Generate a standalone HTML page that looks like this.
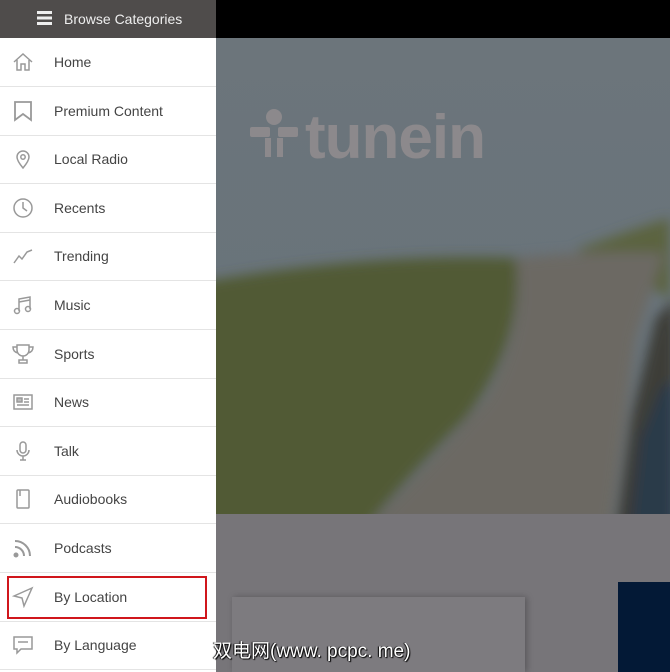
<!DOCTYPE html>
<html><head><meta charset="utf-8"><style>
body{margin:0;width:670px;height:672px;overflow:hidden;background:#777579;font-family:"Liberation Sans",Arial,sans-serif;position:relative}
#top{position:absolute;left:0;top:0;width:670px;height:38px;background:#000}
#hdr{position:absolute;left:0;top:0;width:216px;height:38px;background:#4f4c4b;color:#eee;font-size:14px}
#hdr .t{position:absolute;left:64px;top:11px}
#bg{position:absolute;left:216px;top:38px}
#card{position:absolute;left:232px;top:597px;width:293px;height:75px;background:#7d7b7f;box-shadow:2px 0 6px rgba(0,0,0,.25)}
#navy{position:absolute;left:618px;top:582px;width:52px;height:90px;background:#031936}
#menu{position:absolute;left:0;top:38px;width:216px;height:634px;background:#fff}
.row{position:absolute;left:0;width:216px;height:48px;border-bottom:1px solid #e4e4e4}
.row span{position:absolute;left:54px;top:16px;font-size:14px;color:#444}
.row svg{position:absolute;left:12px;top:13px}
#hl{position:absolute;left:7px;top:576px;width:196px;height:39px;border:2px solid #d0161c}
#wm{position:absolute;left:213px;top:636px;font-size:19px;color:#fff;font-family:"Liberation Sans","Noto Sans CJK SC",sans-serif;text-shadow:1px 1px 1px #000,-1px 0 1px #000}
</style></head><body>
<div id="top"></div>
<div id="hdr"><svg style="position:absolute;left:37px;top:11px" width="15" height="14"><rect y="0" width="15" height="3" fill="#eee"/><rect y="5.5" width="15" height="3" fill="#eee"/><rect y="11" width="15" height="3" fill="#eee"/></svg><span class="t">Browse Categories</span></div>
<svg id="bg" width="454" height="476" viewBox="0 0 454 476">
<defs><linearGradient id="sky" x1="0" y1="0" x2="0" y2="1"><stop offset="0" stop-color="#6c757b"/><stop offset="1" stop-color="#66727a"/></linearGradient>
<filter id="bl" x="-10%" y="-10%" width="120%" height="120%"><feGaussianBlur stdDeviation="6"/></filter></defs>
<rect width="454" height="476" fill="url(#sky)"/>
<g filter="url(#bl)">
<path d="M360 212 Q420 190 454 180 L454 260 L400 230 Z" fill="#5c6440"/>
<path d="M-20 245 Q150 215 300 220 Q310 300 250 380 Q190 440 150 490 L-20 490 Z" fill="#515a35"/>
<path d="M300 220 Q380 212 448 215 L420 300 L395 490 L150 490 Q220 420 270 360 Q310 290 300 220 Z" fill="#6c6963"/>
<path d="M440 280 L460 260 L460 490 L400 490 L415 380 Z" fill="#3c3c38"/>
<path d="M425 400 L445 350 L460 340 L460 490 L415 490 Z" fill="#2c3a48"/>
</g>
<g fill="#8c898c"><circle cx="58" cy="79" r="8"/><rect x="34" y="89" width="20" height="10" rx="2"/><rect x="62" y="89" width="20" height="10" rx="2"/><rect x="49" y="100" width="6" height="19"/><rect x="61" y="100" width="6" height="19"/>
<text x="89" y="120" font-size="62" font-weight="bold" font-family="Liberation Sans,sans-serif" letter-spacing="-1">tunein</text></g>
</svg>
<div id="card"></div><div id="navy"></div>
<div id="menu">
<div class="row" style="top:0"><svg width="22" height="22" fill="none" stroke="#999" stroke-width="1.5"><path d="M2 11 L11 3 L20 11 M5 9 V19 H9 V13 H13 V19 H17 V9"/></svg><span>Home</span></div>
<div class="row" style="top:48.6px"><svg width="22" height="22" fill="none" stroke="#999" stroke-width="1.8"><path d="M3 2 H19 V20 L11 14 L3 20 Z"/></svg><span>Premium Content</span></div>
<div class="row" style="top:97.2px"><svg width="22" height="22" fill="none" stroke="#999" stroke-width="1.5"><path d="M11 20 C6 14 5 11 5 9 A6 6 0 0 1 17 9 C17 11 16 14 11 20 Z"/><circle cx="11" cy="9" r="2.2"/></svg><span>Local Radio</span></div>
<div class="row" style="top:145.8px"><svg width="22" height="22" fill="none" stroke="#999" stroke-width="1.5"><circle cx="11" cy="11" r="9"/><path d="M11 5 V11 L15 14"/></svg><span>Recents</span></div>
<div class="row" style="top:194.4px"><svg width="22" height="22" fill="none" stroke="#999" stroke-width="1.5"><path d="M2 18 L7 11 L10 14 L15 7 L20 5"/></svg><span>Trending</span></div>
<div class="row" style="top:243px"><svg width="22" height="22" fill="none" stroke="#999" stroke-width="1.5"><path d="M7 17 V5 L18 3 V15"/><circle cx="5" cy="17" r="2.5"/><circle cx="16" cy="15" r="2.5"/><path d="M7 8 L18 6"/></svg><span>Music</span></div>
<div class="row" style="top:291.6px"><svg width="22" height="22" fill="none" stroke="#999" stroke-width="1.5"><path d="M5 2 H17 V7 A6 6 0 0 1 5 7 Z M5 4 H1 Q1 9 6 10 M17 4 H21 Q21 9 16 10 M11 13 V17 M7 20 H15 V17 H7 Z"/></svg><span>Sports</span></div>
<div class="row" style="top:340.2px"><svg width="22" height="22" fill="none" stroke="#999" stroke-width="1.5"><rect x="2" y="4" width="18" height="14"/><rect x="5" y="7" width="5" height="4" fill="#bbb"/><path d="M12 8 H17 M12 11 H17 M5 14 H17"/></svg><span>News</span></div>
<div class="row" style="top:388.8px"><svg width="22" height="22" fill="none" stroke="#999" stroke-width="1.5"><rect x="8" y="2" width="6" height="11" rx="3"/><path d="M5 10 A6 6 0 0 0 17 10 M11 16 V20 M8 20 H14"/></svg><span>Talk</span></div>
<div class="row" style="top:437.4px"><svg width="22" height="22" fill="none" stroke="#999" stroke-width="1.5"><rect x="5" y="2" width="12" height="18" rx="1"/><path d="M8 2 V8"/></svg><span>Audiobooks</span></div>
<div class="row" style="top:486px"><svg width="22" height="22" fill="none" stroke="#999" stroke-width="2"><path d="M3 10 A9 9 0 0 1 12 19 M3 4 A15 15 0 0 1 18 19"/><circle cx="4" cy="18" r="1.5" fill="#999"/></svg><span>Podcasts</span></div>
<div class="row" style="top:534.6px"><svg width="22" height="22" fill="none" stroke="#999" stroke-width="1.5"><path d="M20 2 L2 10 L10 12 L12 20 Z"/></svg><span>By Location</span></div>
<div class="row" style="top:583.2px"><svg width="22" height="22" fill="none" stroke="#999" stroke-width="1.5"><path d="M2 3 H20 V15 H9 L5 19 V15 H2 Z M6 8 H16"/></svg><span>By Language</span></div>
</div>
<div id="hl"></div>
<div id="wm">双电网(www. pcpc. me)</div>
</body></html>
